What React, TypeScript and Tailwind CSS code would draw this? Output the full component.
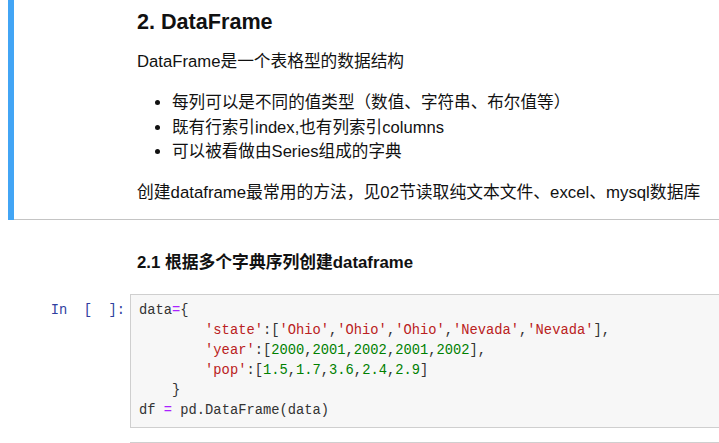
import React from 'react';

const SANS = '"Liberation Sans", Arial, "Noto Sans CJK SC", sans-serif';
const MONO = '"Liberation Mono", "Courier New", monospace';

const S = ({ children }: { children: React.ReactNode }) => <span className="text-[#BA2121]">{children}</span>;
const N = ({ children }: { children: React.ReactNode }) => <span className="text-[#008000]">{children}</span>;
const O = ({ children }: { children: React.ReactNode }) => <span className="text-[#AA22FF]">{children}</span>;

function MarkdownCell() {
  return (
    <div className="flex ml-[8px]">
      <div className="w-[6px] bg-[#42A5F5] shrink-0" />
      <div className="flex-1 border-b border-[#c4c4c4] pl-[123px] pt-[9px] pb-[14px] text-[#111]">
        <h2 className="text-[21.6px] font-bold leading-[26px]">2. DataFrame</h2>
        <p className="mt-[15px] text-[16.7px] leading-[24px]">DataFrame是一个表格型的数据结构</p>
        <ul className="mt-[17px] text-[16.6px] leading-[24.5px] pl-[35px] list-disc">
          <li>每列可以是不同的值类型（数值、字符串、布尔值等）</li>
          <li>既有行索引index,也有列索引columns</li>
          <li>可以被看做由Series组成的字典</li>
        </ul>
        <p className="mt-[16px] text-[16.8px] leading-[24px] whitespace-nowrap">
          创建dataframe最常用的方法，见02节读取纯文本文件、excel、mysql数据库
        </p>
      </div>
    </div>
  );
}

function CodeCell() {
  return (
    <div className="flex" style={{ fontFamily: MONO }}>
      <div className="w-[130px] shrink-0 pr-[5px] pt-[7px] text-right text-[13.77px] leading-[20px] text-[#303F9F] whitespace-pre">
        {'In  [  ]:'}
      </div>
      <div className="w-[620px] shrink-0 border border-[#cfcfcf] bg-[#f7f7f7] px-[8px] pt-[6px] pb-[6px]">
        <pre className="text-[13.77px] leading-[20px] text-[#333]" style={{ fontFamily: MONO }}>
          {'data'}<O>=</O>{'{\n'}
          {'        '}<S>'state'</S>{':['}<S>'Ohio'</S>{','}<S>'Ohio'</S>{','}<S>'Ohio'</S>{','}<S>'Nevada'</S>{','}<S>'Nevada'</S>{'],\n'}
          {'        '}<S>'year'</S>{':['}<N>2000</N>{','}<N>2001</N>{','}<N>2002</N>{','}<N>2001</N>{','}<N>2002</N>{'],\n'}
          {'        '}<S>'pop'</S>{':['}<N>1.5</N>{','}<N>1.7</N>{','}<N>3.6</N>{','}<N>2.4</N>{','}<N>2.9</N>{']\n'}
          {'    }\n'}
          {'df '}<O>=</O>{' pd.DataFrame(data)'}
        </pre>
      </div>
    </div>
  );
}

export default function App() {
  return (
    <div className="w-[719px] h-[443px] bg-white overflow-hidden" style={{ fontFamily: SANS }}>
      <MarkdownCell />
      <div className="pl-[137px] pt-[31px] text-[16.8px] font-bold leading-[24px] text-[#111]">
        2.1 根据多个字典序列创建dataframe
      </div>
      <div className="mt-[19px]">
        <CodeCell />
      </div>
      <div className="ml-[130px] mt-[14px] h-[20px] w-[620px] border border-[#cfcfcf] bg-[#f7f7f7]" />
    </div>
  );
}
